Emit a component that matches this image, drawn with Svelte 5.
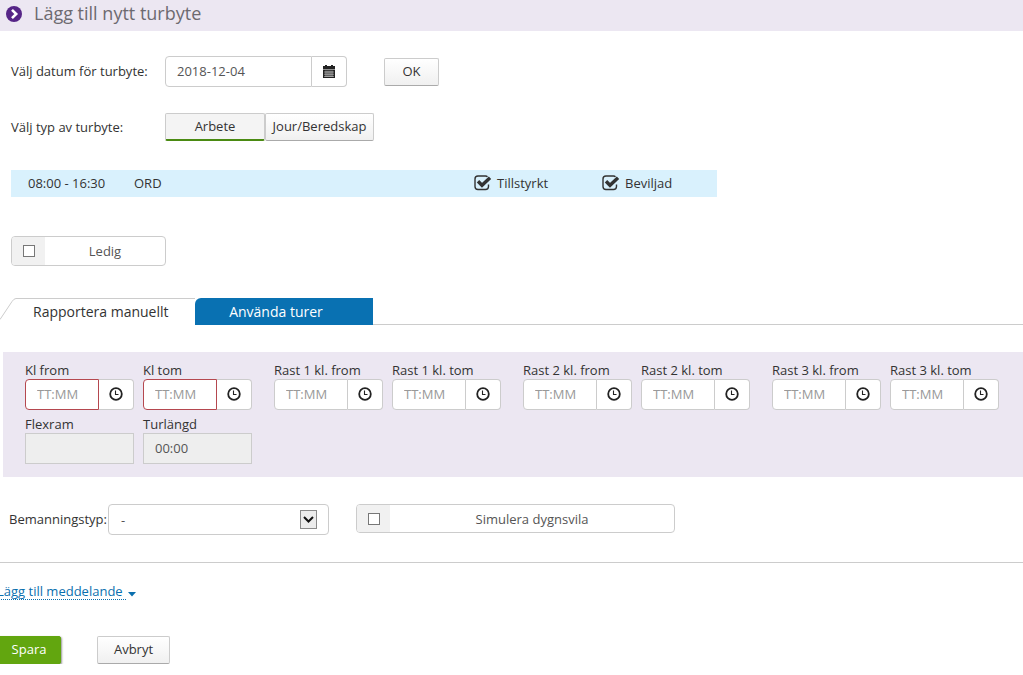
<script lang="ts">
	/**
	 * Form for adding a shift swap.
	 */
	type TimeField = { id: string; label: string; required?: boolean };

	let date = $state('2018-12-04');
	let shiftType = $state('Arbete');
	let staffing = $state('-');
	let dayOff = $state(false);
	let simulateRest = $state(false);

	const shiftTypes = ['Arbete', 'Jour/Beredskap'];

	const groups: TimeField[][] = [
		[
			{ id: 'kl-from', label: 'Kl from', required: true },
			{ id: 'kl-tom', label: 'Kl tom', required: true }
		],
		[
			{ id: 'rast1-from', label: 'Rast 1 kl. from' },
			{ id: 'rast1-tom', label: 'Rast 1 kl. tom' }
		],
		[
			{ id: 'rast2-from', label: 'Rast 2 kl. from' },
			{ id: 'rast2-tom', label: 'Rast 2 kl. tom' }
		],
		[
			{ id: 'rast3-from', label: 'Rast 3 kl. from' },
			{ id: 'rast3-tom', label: 'Rast 3 kl. tom' }
		]
	];

	const approvals = ['Tillstyrkt', 'Beviljad'];
</script>

{#snippet timeField(field: TimeField)}
	<div class="field">
		<label for={field.id}>{field.label}</label>
		<div class="input-group">
			<input id={field.id} class="text-input" class:invalid={field.required} type="text" placeholder="TT:MM" />
			<button class="addon" type="button" aria-label="Välj tid">
				<svg width="14" height="14" viewBox="0 0 14 14">
					<circle cx="7" cy="7" r="5.8" fill="none" stroke="currentColor" stroke-width="1.8" />
					<path d="M6.500 3.500v4H9.500" fill="none" stroke="currentColor" stroke-width="1.1" />
				</svg>
			</button>
		</div>
	</div>
{/snippet}

<header class="page-header">
	<svg width="16" height="16" viewBox="0 0 16 16">
		<circle cx="8" cy="8" r="8" fill="#562587" />
		<path d="M6 3.8L10.2 8L6 12.2" fill="none" stroke="#fff" stroke-width="2.6" />
	</svg>
	<h1>Lägg till nytt turbyte</h1>
</header>

<form class="swap-form" onsubmit={(e) => e.preventDefault()}>
	<div class="row date-row">
		<label class="row-label" for="date">Välj datum för turbyte:</label>
		<div class="input-group date-group">
			<input id="date" class="text-input" type="text" bind:value={date} />
			<button class="addon" type="button" aria-label="Öppna kalender">
				<svg width="12" height="13" viewBox="0 0 12 13">
					<path d="M0 1h2V0h2v1h4V0h2v1h2v3H0z" fill="currentColor" />
					<path d="M0 4.500h12V13H0z" fill="currentColor" />
					<path
						d="M1 7h10M1 9.200h10M1 11.400h10M3 5.500v6.500M5 5.500v6.500M7 5.500v6.500M9 5.500v6.500"
						stroke="#fff"
						stroke-width="0.5"
					/>
				</svg>
			</button>
		</div>
		<button class="btn ok" type="button">OK</button>
	</div>

	<div class="row type-row">
		<span class="row-label">Välj typ av turbyte:</span>
		<div class="toggle">
			{#each shiftTypes as type (type)}
				<button
					class="btn"
					class:selected={shiftType === type}
					type="button"
					aria-pressed={shiftType === type}
					onclick={() => (shiftType = type)}>{type}</button
				>
			{/each}
		</div>
	</div>

	<div class="shift">
		<span>08:00 - 16:30</span>
		<span>ORD</span>
		{#each approvals as approval (approval)}
			<label class="approval">
				<input type="checkbox" checked />
				<svg width="18" height="16" viewBox="0 0 18 16">
					<path
						d="M13.500 1.700Q12.800 1 11.500 1H4Q1 1 1 4v7.500q0 3 3 3h7.500q3 0 3-3V9.500"
						fill="none"
						stroke="currentColor"
						stroke-width="1.400"
					/>
					<path d="M4 6.300l4 4L16 2.800" fill="none" stroke="currentColor" stroke-width="3.400" />
				</svg>
				{approval}
			</label>
		{/each}
	</div>

	<label class="check-box day-off">
		<span class="check-cell"><input type="checkbox" bind:checked={dayOff} /></span>
		<span class="check-text">Ledig</span>
	</label>

	<div class="tabs" role="tablist">
		<svg class="tab-edge" width="16" height="27" viewBox="0 0 16 27">
			<path d="M0 21.500L12 3.500Q14 0.500 16 0.500" fill="none" stroke="#ccc" />
		</svg>
		<button class="tab active" type="button" role="tab" aria-selected="true">Rapportera manuellt</button>
		<button class="tab other" type="button" role="tab" aria-selected="false">Använda turer</button>
		<span class="tab-rest"></span>
	</div>

	<section class="panel">
		<div class="groups">
			{#each groups as group, i (i)}
				<div class="group">
					{#each group as field (field.id)}
						{@render timeField(field)}
					{/each}
				</div>
			{/each}
		</div>
		<div class="group">
			<div class="field">
				<label for="flexram">Flexram</label>
				<input id="flexram" class="text-input locked" type="text" readonly />
			</div>
			<div class="field">
				<label for="turlangd">Turlängd</label>
				<input id="turlangd" class="text-input locked" type="text" value="00:00" readonly />
			</div>
		</div>
	</section>

	<div class="row staffing-row">
		<label class="staffing-label" for="staffing">Bemanningstyp:</label>
		<div class="select-wrap">
			<select id="staffing" bind:value={staffing}>
				<option value="-">-</option>
			</select>
			<svg class="select-arrow" width="17" height="19" viewBox="0 0 17 19">
				<rect x="0.500" y="0.500" width="16" height="18" fill="#ececec" stroke="#8a8a8a" />
				<path d="M4 7l4.500 4.500L13 7" fill="none" stroke="#111" stroke-width="2" />
			</svg>
		</div>
		<label class="check-box simulate">
			<span class="check-cell"><input type="checkbox" bind:checked={simulateRest} /></span>
			<span class="check-text">Simulera dygnsvila</span>
		</label>
	</div>

	<div class="message">
		<a href="#meddelande">Lägg till meddelande</a>
		<svg width="8" height="5" viewBox="0 0 8 5"><path d="M0 0h8L4 4.500z" fill="#0a6fae" /></svg>
	</div>

	<div class="actions">
		<button class="btn save" type="submit">Spara</button>
		<button class="btn cancel" type="button">Avbryt</button>
	</div>
</form>

<style>
	:global(body) {
		background: #fff;
		color: #333;
		font-family: 'Open Sans', 'Noto Sans', sans-serif;
		font-size: 13px;
		line-height: 18px;
		overflow-x: hidden;
	}

	input,
	button,
	select {
		box-sizing: border-box;
		font: inherit;
		color: inherit;
		margin: 0;
	}

	svg {
		display: block;
		flex: none;
	}

	.page-header {
		display: flex;
		align-items: center;
		gap: 12px;
		height: 27px;
		padding: 0 6px 4px;
		background: #ece7f2;
	}

	h1 {
		margin: 0;
		padding-bottom: 2px;
		font-size: 18px;
		font-weight: 400;
		line-height: 24px;
		color: #6d6a70;
	}

	.row {
		display: flex;
		align-items: center;
	}

	.date-row,
	.type-row {
		padding-left: 11px;
	}

	.date-row {
		margin-top: 25px;
	}

	.type-row {
		margin-top: 26px;
	}

	.row-label {
		width: 154px;
		padding-bottom: 1px;
	}

	.input-group {
		display: flex;
	}

	.text-input {
		width: 100%;
		min-width: 0;
		height: 31px;
		padding: 0 11px 1px;
		border: 1px solid #ccc;
		border-radius: 4px;
		background: #fff;
		color: #555;
		outline: none;
	}

	.text-input::placeholder {
		color: #999;
		opacity: 1;
	}

	.input-group .text-input {
		border-radius: 4px 0 0 4px;
	}

	.text-input.invalid {
		border-color: #b5484f;
	}

	.text-input.locked {
		border-radius: 0;
		background: #eee;
	}

	.addon {
		display: flex;
		flex: none;
		align-items: center;
		justify-content: center;
		width: 35px;
		padding: 0 0 1px;
		border: 1px solid #ccc;
		border-left: 0;
		border-radius: 0 4px 4px 0;
		background: #fff;
		color: #222;
	}

	.date-group {
		width: 182px;
	}

	.btn {
		height: 28px;
		padding: 0 0 2px;
		border: 1px solid #ccc;
		border-bottom-color: #aaa;
		border-radius: 2px;
		background: linear-gradient(#fff, #f0f0f0);
	}

	.ok {
		width: 55px;
		margin-left: 37px;
	}

	.toggle {
		display: flex;
	}

	.toggle .btn {
		width: 109px;
	}

	.toggle .btn.selected {
		width: 100px;
		border-bottom: 2px solid #4a8a12;
		background: #f4f4f4;
	}

	.shift {
		display: grid;
		grid-template-columns: 106px 340px 128px auto;
		align-items: center;
		box-sizing: border-box;
		width: 69%;
		height: 27px;
		margin: 29px 0 0 11px;
		padding: 0 0 1px 17px;
		background: #d9f1fd;
	}

	.approval {
		display: flex;
		align-items: center;
		gap: 5px;
	}

	.approval input {
		position: absolute;
		opacity: 0;
	}

	.check-box {
		display: flex;
		box-sizing: border-box;
		height: 30px;
		border: 1px solid #ccc;
		border-radius: 4px;
		background: #fff;
		color: #555;
		overflow: hidden;
	}

	.check-cell {
		display: flex;
		align-items: center;
		justify-content: center;
		width: 33px;
		background: #f1f1f1;
	}

	.check-cell input {
		width: 12px;
		height: 12px;
		border: 1px solid #777;
		background: #fff;
		appearance: none;
	}

	.check-cell input:checked {
		background: #555;
	}

	.check-text {
		flex: 1;
		line-height: 28px;
		text-align: center;
	}

	.day-off {
		width: 155px;
		margin: 39px 0 0 11px;
	}

	.tabs {
		display: flex;
		height: 27px;
		margin-top: 32px;
	}

	.tab {
		padding: 0;
		border: 0;
		font-size: 14px;
	}

	.tab.active {
		width: 179px;
		padding-left: 17px;
		border-top: 1px solid #ccc;
		background: #fff;
		text-align: left;
	}

	.tab.other {
		width: 178px;
		padding-right: 16px;
		border-radius: 6px 0 0 0;
		background: #0971b2;
		color: #fff;
	}

	.tab-rest {
		flex: 1;
		border-bottom: 1px solid #ccc;
	}

	.panel {
		display: flex;
		flex-direction: column;
		gap: 5px;
		margin: 27px 0 0 3px;
		padding: 9px 0 13px 22px;
		background: #ece7f2;
	}

	.groups {
		display: flex;
		gap: 22px;
	}

	.group {
		display: flex;
		gap: 9px;
	}

	.field {
		width: 109px;
	}

	.field label,
	.field > input {
		display: block;
	}

	.staffing-row {
		align-items: flex-start;
		padding: 27px 0 27px 9px;
		border-bottom: 1px solid #ccc;
	}

	.staffing-label {
		width: 99px;
		line-height: 31px;
		white-space: nowrap;
	}

	.select-wrap {
		position: relative;
		width: 221px;
	}

	select {
		display: block;
		width: 100%;
		height: 31px;
		padding: 0 12px;
		border: 1px solid #ccc;
		border-radius: 4px;
		background: #fff;
		color: #555;
		appearance: none;
	}

	.select-arrow {
		position: absolute;
		top: 6px;
		right: 12px;
		pointer-events: none;
	}

	.simulate {
		width: 319px;
		height: 29px;
		margin-left: 27px;
	}

	.message {
		display: flex;
		align-items: center;
		gap: 2px;
		margin: 20px 0 0 -3px;
	}

	.message a {
		padding-right: 3px;
		border-bottom: 1px dotted #0a6fae;
		color: #0a6fae;
		line-height: 16px;
		text-decoration: none;
	}

	.message svg {
		margin-top: 6px;
	}

	.actions {
		display: flex;
		gap: 36px;
		margin: 36px 0 0 -3px;
	}

	.save {
		width: 64px;
		border-color: #62a60f;
		background: #62a60f;
		box-shadow: 1px 1px 2px #999;
		color: #fff;
	}

	.cancel {
		width: 73px;
	}
</style>
